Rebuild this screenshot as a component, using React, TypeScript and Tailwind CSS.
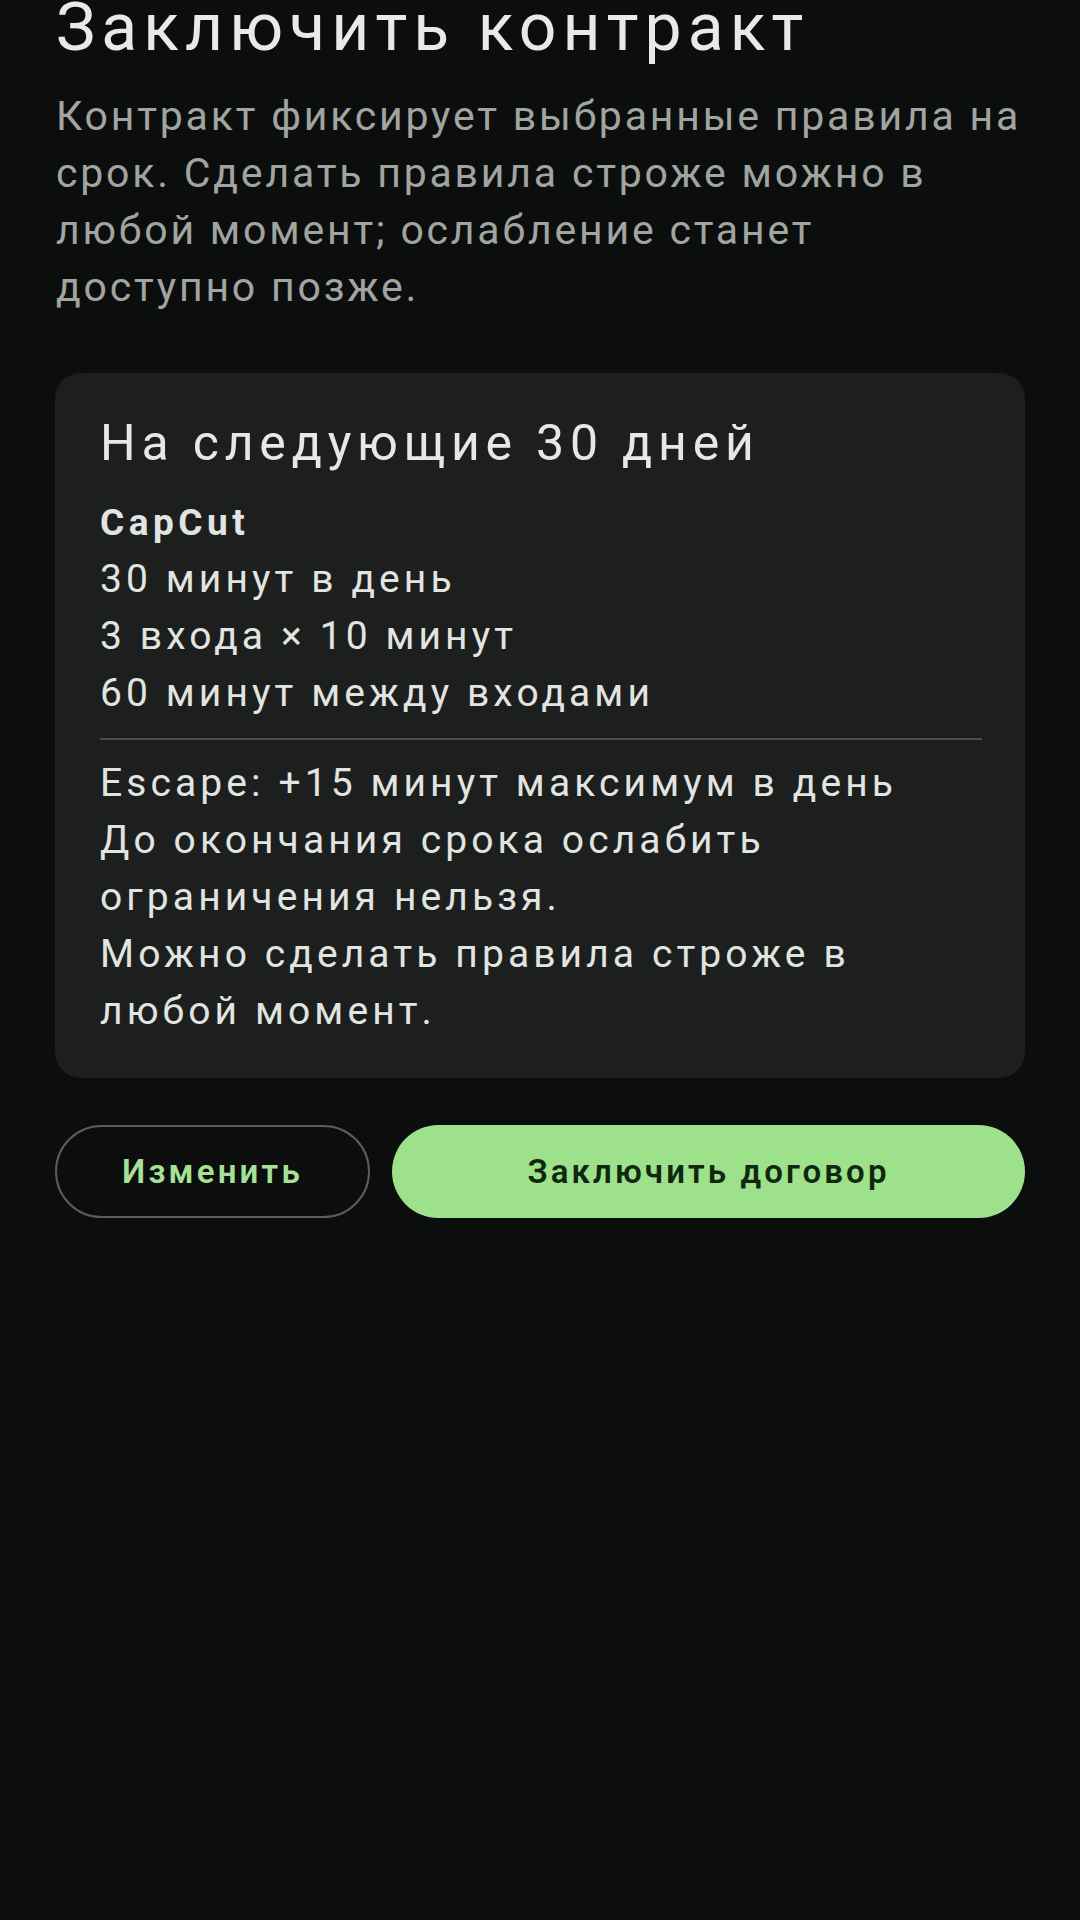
import React from "react";

function ContractCard() {
  return (
    <div className="rounded-[26px] bg-[#1c1f1e] pl-[45px] pr-[43px] pt-[40px] pb-[38px]">
      <h2 className="text-[50px] leading-[60px] tracking-[5.8px] text-[#e6e8e5]">
        На следующие 30 дней
      </h2>
      <div className="mt-[21px] text-[39px] leading-[57px] tracking-[4.1px] text-[#e2e4e1]">
        <p className="text-[37px] font-bold tracking-[4.5px]">CapCut</p>
        <p>30 минут в день</p>
        <p>3 входа × 10 минут</p>
        <p>60 минут между входами</p>
      </div>
      <div className="mt-[16px] h-[2px] bg-[#4a4d4b]" />
      <div className="mt-[15px] text-[39px] leading-[57px] tracking-[4.1px] text-[#e2e4e1]">
        <p>Escape: +15 минут максимум в день</p>
        <p>
          До окончания срока ослабить
          <br />
          ограничения нельзя.
        </p>
        <p>
          Можно сделать правила строже в
          <br />
          любой момент.
        </p>
      </div>
    </div>
  );
}

export default function App() {
  return (
    <div
      className="min-h-[1920px] w-[1080px] overflow-hidden bg-[#0c0e0d] px-[55px]"
      style={{ fontFamily: "Roboto, 'Noto Sans', sans-serif" }}
    >
      <h1 className="-mt-[10px] pl-[1px] text-[66px] leading-[76px] tracking-[6.1px] text-[#e8eae7]">
        Заключить контракт
      </h1>
      <p className="mt-[22px] pl-[1px] text-[41px] leading-[57px] tracking-[2.8px] text-[#a1a4a1] whitespace-nowrap">
        Контракт фиксирует выбранные правила на
        <br />
        срок. Сделать правила строже можно в
        <br />
        любой момент; ослабление станет
        <br />
        доступно позже.
      </p>

      <div className="mt-[57px]">
        <ContractCard />
      </div>

      <div className="mt-[47px] flex gap-[22px]">
        <button
          type="button"
          className="flex h-[93px] w-[315px] items-center justify-center rounded-full border-2 border-[#5a5d5b] text-[33px] font-semibold tracking-[3.2px] text-[#a6e197]"
        >
          Изменить
        </button>
        <button
          type="button"
          className="flex h-[93px] flex-1 items-center justify-center rounded-full bg-[#9de18b] text-[33px] font-semibold tracking-[3.1px] text-[#10280f]"
        >
          Заключить договор
        </button>
      </div>
    </div>
  );
}
